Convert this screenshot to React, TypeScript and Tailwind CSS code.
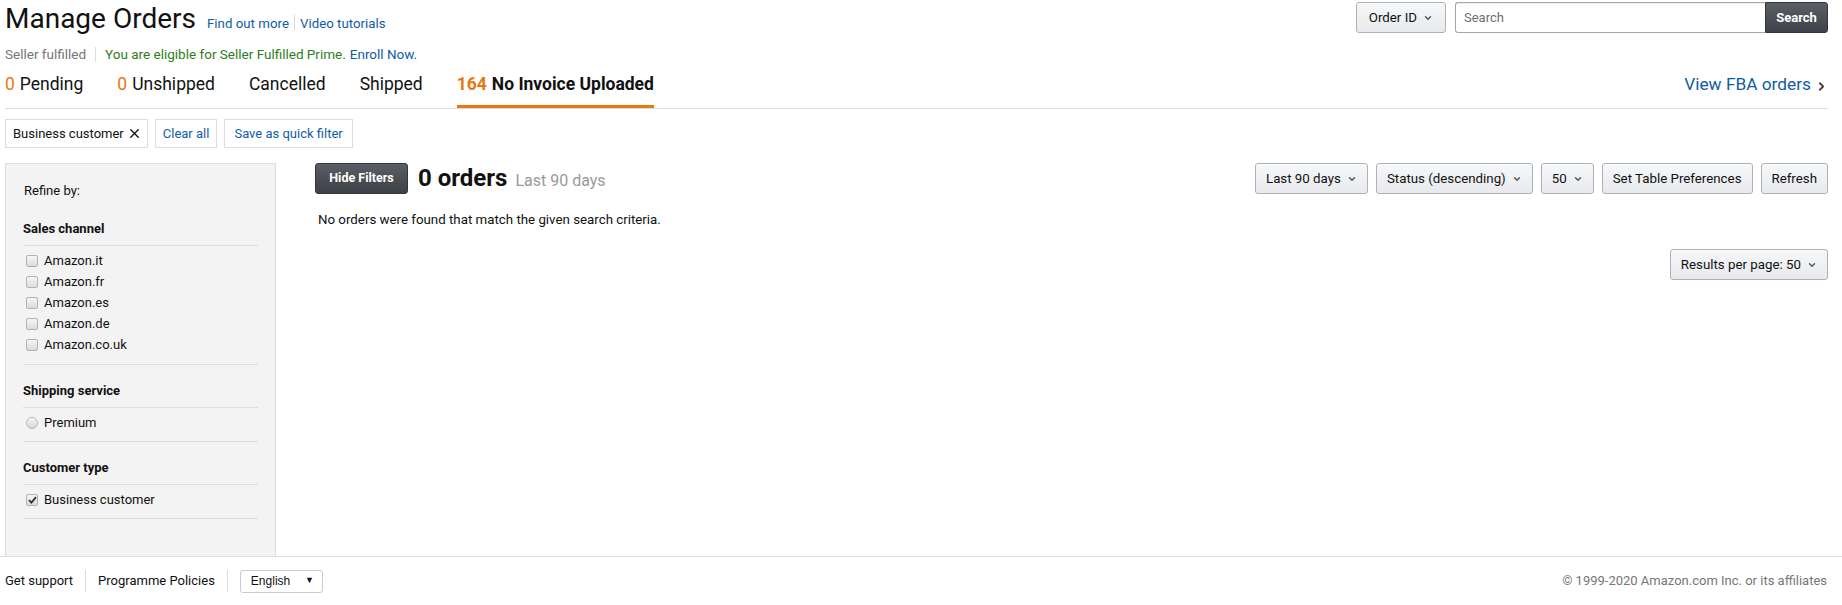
import React from "react";
import { ChevronDown, ChevronRight, X } from "lucide-react";

const CHANNELS = ["Amazon.it", "Amazon.fr", "Amazon.es", "Amazon.de", "Amazon.co.uk"];

function Checkbox({ checked = false }: { checked?: boolean }) {
  return (
    <span className="w-[12px] h-[12px] rounded-[2px] border border-[#b3b3b3] bg-gradient-to-b from-[#f5f5f5] to-[#dcdcdc] flex items-center justify-center shrink-0">
      {checked && (
        <svg width="9" height="8" viewBox="0 0 9 8">
          <path d="M1 4.2 L3.4 6.6 L8 1.2" stroke="#333" strokeWidth="1.8" fill="none" />
        </svg>
      )}
    </span>
  );
}

function Radio() {
  return (
    <span className="w-[12px] h-[12px] rounded-full border border-[#b9b9b9] bg-gradient-to-b from-[#f5f5f5] to-[#d8d8d8] shrink-0" />
  );
}

function GrayButton({ children, chevron = false, className = "" }: { children: React.ReactNode; chevron?: boolean; className?: string }) {
  return (
    <button
      className={`h-[31px] px-[10px] flex items-center gap-[6px] whitespace-nowrap rounded-[3px] border border-[#adb1b8] bg-gradient-to-b from-[#f7f8fa] to-[#e7e9ec] text-[13.3px] text-[#111] shadow-[0_1px_0_rgba(255,255,255,0.6)_inset] ${className}`}
    >
      {children}
      {chevron && <ChevronDown size={10} strokeWidth={3.4} className="text-[#555] mt-[1px]" />}
    </button>
  );
}

function SectionHead({ label, first = false }: { label: string; first?: boolean }) {
  return (
    <div className={`${first ? "mt-[20px]" : "mt-[17px]"} pb-[7px] border-b border-[#ddd] text-[13px] leading-[18px] font-bold text-[#111]`}>
      {label}
    </div>
  );
}

export default function App() {
  return (
    <div className="w-[1842px] h-[605px] bg-white font-[Roboto,'Liberation_Sans',sans-serif] text-[#111] overflow-hidden">
      <div className="pl-[5px] pr-[14px]">
        {/* title + search */}
        <div className="h-[38px] flex justify-between">
          <div className="flex items-baseline">
            <h1 className="text-[28px] leading-[38px] text-[#111] font-normal">Manage Orders</h1>
            <a className="ml-[11px] text-[13.3px] text-[#125ca6]">Find out more</a>
            <span className="mx-[5px] h-[16px] border-l border-[#ddd] self-center mt-[6px]" />
            <a className="text-[13.3px] text-[#125ca6]">Video tutorials</a>
          </div>
          <div className="flex items-start pt-[2px]">
            <GrayButton chevron className="px-[12px]">Order ID</GrayButton>
            <div className="ml-[9px] h-[31px] w-[310px] border border-[#a6a6a6] border-r-0 rounded-l-[3px] flex items-center px-[8px] text-[13px] text-[#6f6f6f] shadow-[0_1px_0_rgba(0,0,0,0.07)_inset]">
              Search
            </div>
            <button className="h-[31px] w-[63px] rounded-r-[3px] bg-gradient-to-b from-[#5a5e65] to-[#3f4349] border border-[#32373e] text-white text-[13px] font-bold">
              Search
            </button>
          </div>
        </div>

        {/* fulfilment line */}
        <div className="mt-[7px] h-[18px] flex items-center text-[13.5px]">
          <span className="text-[#767676]">Seller fulfilled</span>
          <span className="mx-[9px] h-[15px] border-l border-[#ddd]" />
          <span className="text-[#2f7d22]">You are eligible for Seller Fulfilled Prime.</span>
          <a className="ml-[4px] text-[#125ca6]">Enroll Now.</a>
        </div>

        {/* tabs */}
        <div className="h-[46px] flex items-stretch justify-between border-b border-[#ddd]">
          <div className="flex items-stretch gap-[34px] text-[17.5px]">
            <div className="flex items-center border-b-[3px] border-transparent"><span className="text-[#e47911] mr-[5px]">0</span>Pending</div>
            <div className="flex items-center border-b-[3px] border-transparent"><span className="text-[#e47911] mr-[5px]">0</span>Unshipped</div>
            <div className="flex items-center border-b-[3px] border-transparent">Cancelled</div>
            <div className="flex items-center border-b-[3px] border-transparent">Shipped</div>
            <div className="flex items-center border-b-[3px] border-[#e47911] font-bold">
              <span className="text-[#e47911] mr-[5px]">164</span>No Invoice Uploaded
            </div>
          </div>
          <a className="flex items-center text-[17.3px] text-[#125ca6] pb-[2px]">
            View FBA orders
            <ChevronRight size={13} strokeWidth={3.5} className="text-[#444] ml-[4px] mt-[3px]" />
          </a>
        </div>

        {/* active filters */}
        <div className="mt-[10px] flex gap-[7px] text-[13px]">
          <div className="h-[29px] pl-[7px] pr-[5px] border border-[#ddd] flex items-center gap-[3px]">
            Business customer <X size={15} strokeWidth={2.2} className="text-[#111]" />
          </div>
          <div className="h-[29px] px-[7px] border border-[#ddd] flex items-center text-[#125ca6]">Clear all</div>
          <div className="h-[29px] px-[9px] border border-[#ddd] flex items-center text-[#125ca6]">Save as quick filter</div>
        </div>

        {/* body */}
        <div className="mt-[15px] flex">
          <aside className="w-[271px] h-[393px] bg-[#f3f3f3] border border-[#ddd] border-b-0 pt-[18px] px-[17px] shrink-0">
            <div className="pl-[1px] text-[13px] leading-[18px] text-[#111]">Refine by:</div>

            <SectionHead label="Sales channel" first />
            <div className="pt-[6px] pb-[10px] flex flex-col gap-[3px] border-b border-[#ddd]">
              {CHANNELS.map((c) => (
                <label key={c} className="flex items-center gap-[6px] h-[18px] text-[13px] pl-[3px]">
                  <Checkbox /> {c}
                </label>
              ))}
            </div>

            <SectionHead label="Shipping service" />
            <div className="pt-[6px] pb-[9px] border-b border-[#ddd]">
              <label className="flex items-center gap-[6px] h-[18px] text-[13px] pl-[3px]">
                <Radio /> Premium
              </label>
            </div>

            <SectionHead label="Customer type" />
            <div className="pt-[6px] pb-[9px] border-b border-[#ddd]">
              <label className="flex items-center gap-[6px] h-[18px] text-[13px] pl-[3px]">
                <Checkbox checked /> Business customer
              </label>
            </div>
          </aside>

          <main className="flex-1 ml-[39px]">
            <div className="h-[31px] flex items-center justify-between">
              <div className="flex items-center">
                <button className="h-[31px] w-[93px] rounded-[3px] bg-gradient-to-b from-[#5a5e65] to-[#3d4046] border border-[#32373e] text-white text-[12.5px] font-bold">
                  Hide Filters
                </button>
                <span className="ml-[10px] text-[24px] leading-[31px] font-bold">0 orders</span>
                <span className="ml-[8px] mt-[5px] text-[16px] leading-[26px] text-[#999]">Last 90 days</span>
              </div>
              <div className="flex items-center gap-[8px]">
                <GrayButton chevron>Last 90 days</GrayButton>
                <GrayButton chevron>Status (descending)</GrayButton>
                <GrayButton chevron>50</GrayButton>
                <GrayButton>Set Table Preferences</GrayButton>
                <GrayButton>Refresh</GrayButton>
              </div>
            </div>
            <p className="mt-[17px] ml-[3px] text-[13.3px] leading-[18px]">No orders were found that match the given search criteria.</p>
            <div className="mt-[20px] flex justify-end">
              <GrayButton chevron>Results per page: 50</GrayButton>
            </div>
          </main>
        </div>
      </div>

      {/* footer */}
      <footer className="border-t border-[#ddd] h-[49px] pl-[5px] pr-[15px] flex items-center justify-between text-[13px]">
        <div className="flex items-center">
          <a className="text-[#111]">Get support</a>
          <span className="mx-[12px] h-[22px] border-l border-[#ddd]" />
          <a className="text-[#111]">Programme Policies</a>
          <span className="mx-[12px] h-[22px] border-l border-[#ddd]" />
          <div className="w-[83px] h-[23px] border border-[#ccc] rounded-[3px] flex items-center justify-between pl-[10px] pr-[8px] font-['Liberation_Sans',Arial,sans-serif] text-[12px]">
            English <span className="text-[9px]">▼</span>
          </div>
        </div>
        <span className="text-[#767676]">© 1999-2020 Amazon.com Inc. or its affiliates</span>
      </footer>
    </div>
  );
}
